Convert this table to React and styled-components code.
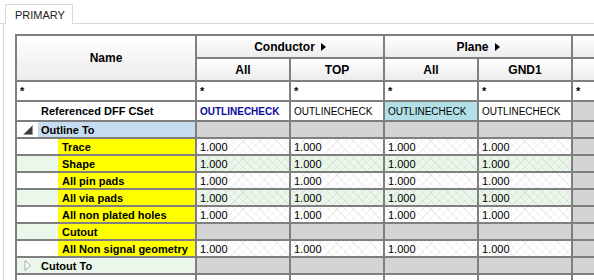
import React from 'react'
import styled, { createGlobalStyle } from 'styled-components'

const GlobalStyle = createGlobalStyle`
    html, body {
        margin: 0;
        padding: 0;
        background: #ffffff;
        overflow: hidden;
    }
    body {
        font-family: "Liberation Sans", Arial, sans-serif;
        color: #000;
    }
`

const lineColor = '#7f7f7f'
const soft = '#d9d9d9'

const Page = styled.div`
    width: 594px;
    height: 280px;
    overflow: hidden;
`

const TabBar = styled.div`
    display: flex;
    align-items: flex-end;
    height: 24px;
`

const TabGap = styled.div`
    width: 5px;
    align-self: stretch;
    border-bottom: 1px solid ${soft};
`

const Tab = styled.div`
    height: 20px;
    padding: 0 9px;
    display: flex;
    align-items: center;
    border: 1px solid ${soft};
    border-bottom: none;
    font-size: 11px;
    color: #222;
    background: #fff;
    box-sizing: border-box;
    width: 68px;
`

const TabFill = styled.div`
    flex: 1;
    align-self: stretch;
    border-bottom: 1px solid ${soft};
`

const Panel = styled.div`
    margin-left: 3px;
    border-left: 1px solid ${soft};
    padding: 10px 0 0 11px;
    overflow: hidden;
    height: 260px;
`

const Grid = styled.div`
    display: grid;
    grid-template-columns: 178px repeat(5, 92px);
    grid-template-rows: 21px 21px 18px 18px repeat(10, 15px);
    gap: 2px;
    width: max-content;
    background: ${lineColor};
    border: 2px solid ${lineColor};
`

const HeadCell = styled.div`
    grid-row: ${p => p.$row || 'auto'};
    grid-column: ${p => p.$col || 'auto'};
    display: flex;
    align-items: center;
    justify-content: center;
    gap: 6px;
    font-size: 12px;
    font-weight: bold;
    background: linear-gradient(#ffffff, #ececec);
`

const Cell = styled.div`
    display: flex;
    align-items: center;
    padding-left: 3px;
    font-size: 11px;
    font-weight: ${p => (p.$bold ? 'bold' : 'normal')};
    color: ${p => p.$color || '#000'};
    background: ${p => p.$bg || '#fff'};
    white-space: nowrap;
    overflow: hidden;
`

const ValueCell = styled(Cell)`
    background-color: ${p => (p.$stripe ? '#ebf7eb' : '#ffffff')};
    background-image:
        repeating-linear-gradient(45deg, transparent 0 5px, rgba(0, 0, 0, 0.06) 5px 6px),
        repeating-linear-gradient(-45deg, transparent 0 5px, rgba(0, 0, 0, 0.06) 5px 6px);
`

const RefText = styled.span`
    font-size: 10px;
`

const NameCell = styled.div`
    display: flex;
    align-items: stretch;
    background: ${p => p.$bg || '#fff'};
    font-size: 11px;
    font-weight: bold;
    white-space: nowrap;
    overflow: hidden;
`

const Indent = styled.div`
    width: ${p => p.$w}px;
    flex: none;
    display: flex;
    align-items: center;
    justify-content: center;
    padding-left: 1px;
`

const Label = styled.div`
    flex: 1;
    display: flex;
    align-items: center;
    padding-left: ${p => p.$pad || 3}px;
    background: ${p => p.$bg || 'transparent'};
`

const OpenIcon = () => (
    <svg width="10" height="10" viewBox="0 0 10 10">
        <polygon points="9.5,0.5 9.5,9.5 0.5,9.5" fill="#3c3c3c" stroke="#8a8a8a" strokeWidth="0.6" />
    </svg>
)

const ClosedIcon = () => (
    <svg width="8" height="11" viewBox="0 0 8 11">
        <polygon points="1,0.5 6.5,5.5 1,10.5" fill="#fff" stroke="#a6a6a6" strokeWidth="1" />
    </svg>
)

const Arrow = () => (
    <svg width="5" height="8" viewBox="0 0 5 8">
        <polygon points="0,0 5,4 0,8" fill="#000" />
    </svg>
)

const gray = '#d4d4d4'
const green = '#ebf7eb'

const refs = [
    { text: 'OUTLINECHECK', bold: true, color: '#0a0a9a' },
    { text: 'OUTLINECHECK' },
    { text: 'OUTLINECHECK', bg: '#b3e0e6' },
    { text: 'OUTLINECHECK' },
    null,
]

const rows = [
    { group: 'Outline To', open: true },
    { label: 'Trace', values: true },
    { label: 'Shape', values: true, stripe: true },
    { label: 'All pin pads', values: true },
    { label: 'All via pads', values: true, stripe: true },
    { label: 'All non plated holes', values: true },
    { label: 'Cutout', stripe: true },
    { label: 'All Non signal geometry', values: true },
    { group: 'Cutout To', open: false, stripe: true },
    { blank: true },
]

function DataCells({ row }) {
    return [0, 1, 2, 3, 4].map(i => {
        if (row.blank) return <Cell key={i} />
        if (i === 4 || !row.values) return <Cell key={i} $bg={gray} />
        return (
            <ValueCell key={i} $stripe={row.stripe}>1.000</ValueCell>
        )
    })
}

function Row({ row }) {
    let name
    if (row.blank) {
        name = <NameCell />
    } else if (row.group) {
        name = (
            <NameCell $bg={row.stripe ? green : '#fff'}>
                <Indent $w={20}>{row.open ? <OpenIcon /> : <ClosedIcon />}</Indent>
                <Label $bg={row.open ? '#c7dcf1' : 'transparent'}>{row.group}</Label>
            </NameCell>
        )
    } else {
        name = (
            <NameCell $bg={row.stripe ? green : '#fff'}>
                <Indent $w={40} />
                <Label $bg="#ffff00" $pad={4}>{row.label}</Label>
            </NameCell>
        )
    }
    return (
        <>
            {name}
            <DataCells row={row} />
        </>
    )
}

export default function App() {
    return (
        <Page>
            <GlobalStyle />
            <TabBar>
                <TabGap />
                <Tab>PRIMARY</Tab>
                <TabFill />
            </TabBar>
            <Panel>
                <Grid>
                    <HeadCell $row="1 / span 2" $col="1">Name</HeadCell>
                    <HeadCell $row="1" $col="2 / span 2">Conductor <Arrow /></HeadCell>
                    <HeadCell $row="1" $col="4 / span 2">Plane <Arrow /></HeadCell>
                    <HeadCell $row="1" $col="6" />
                    <HeadCell>All</HeadCell>
                    <HeadCell>TOP</HeadCell>
                    <HeadCell>All</HeadCell>
                    <HeadCell>GND1</HeadCell>
                    <HeadCell />

                    {[0, 1, 2, 3, 4, 5].map(i => (
                        <Cell key={i} $bold>*</Cell>
                    ))}

                    <NameCell>
                        <Indent $w={20} />
                        <Label>Referenced DFF CSet</Label>
                    </NameCell>
                    {refs.map((r, i) =>
                        r ? (
                            <Cell key={i} $bold={r.bold} $color={r.color} $bg={r.bg}>
                                <RefText>{r.text}</RefText>
                            </Cell>
                        ) : (
                            <Cell key={i} $bg={gray} />
                        )
                    )}

                    {rows.map((row, i) => (
                        <Row key={i} row={row} />
                    ))}
                </Grid>
            </Panel>
        </Page>
    )
}
